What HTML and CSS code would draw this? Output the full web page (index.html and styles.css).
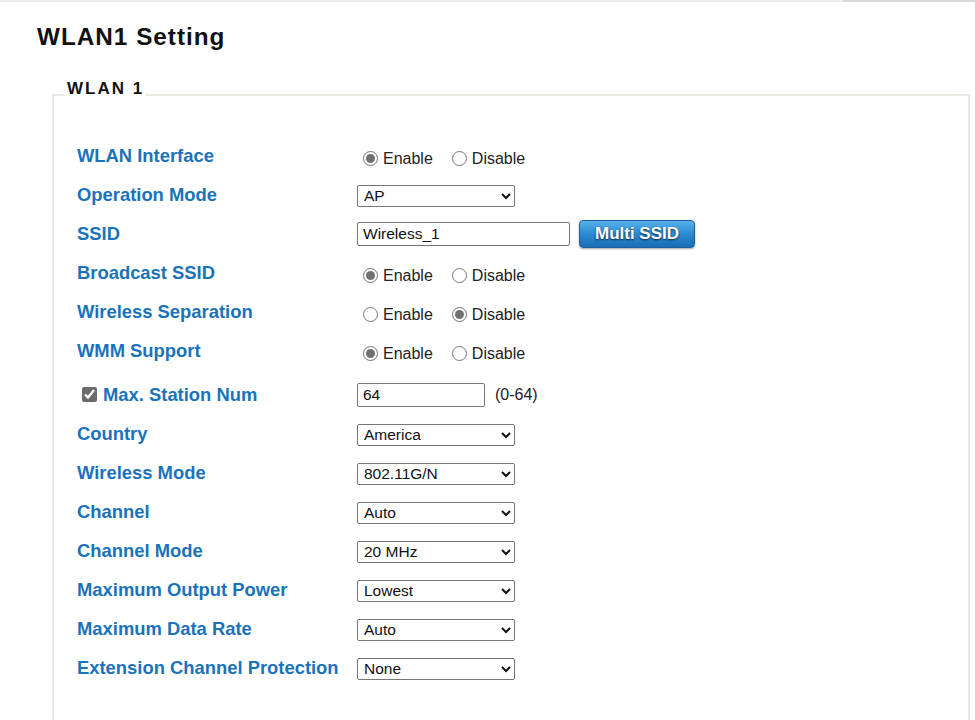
FILE: index.html
```html
<!DOCTYPE html>
<html lang="en">
<head>
  <meta charset="UTF-8">
  <meta name="viewport" content="width=device-width, initial-scale=1.0">
  <title>WLAN1 Setting</title>
  <link rel="stylesheet" href="styles.css">
</head>
<body>

  <div class="topbar"></div>

  <div class="page">
    <h2 class="page-title">WLAN1 Setting</h2>

    <fieldset class="wlan-box">
      <legend>WLAN 1</legend>

      <div class="settings">
        <span class="field-label">WLAN Interface</span>
        <div class="field">
          <label class="radio"><input type="radio" name="iface" checked> Enable</label>
          <label class="radio"><input type="radio" name="iface"> Disable</label>
        </div>

        <span class="field-label">Operation Mode</span>
        <div class="field">
          <select><option>AP</option></select>
        </div>

        <span class="field-label">SSID</span>
        <div class="field">
          <input type="text" class="text-input ssid" value="Wireless_1">
          <button type="button" class="btn-blue">Multi SSID</button>
        </div>

        <span class="field-label">Broadcast SSID</span>
        <div class="field">
          <label class="radio"><input type="radio" name="bcast" checked> Enable</label>
          <label class="radio"><input type="radio" name="bcast"> Disable</label>
        </div>

        <span class="field-label">Wireless Separation</span>
        <div class="field">
          <label class="radio"><input type="radio" name="sep"> Enable</label>
          <label class="radio"><input type="radio" name="sep" checked> Disable</label>
        </div>

        <span class="field-label">WMM Support</span>
        <div class="field">
          <label class="radio"><input type="radio" name="wmm" checked> Enable</label>
          <label class="radio"><input type="radio" name="wmm"> Disable</label>
        </div>

        <span class="field-label tall"><input type="checkbox" class="check" checked> Max. Station Num</span>
        <div class="field tall">
          <input type="text" class="text-input station" value="64">
          <span class="hint">(0-64)</span>
        </div>

        <span class="field-label">Country</span>
        <div class="field">
          <select><option>America</option></select>
        </div>

        <span class="field-label">Wireless Mode</span>
        <div class="field">
          <select><option>802.11G/N</option></select>
        </div>

        <span class="field-label">Channel</span>
        <div class="field">
          <select><option>Auto</option></select>
        </div>

        <span class="field-label">Channel Mode</span>
        <div class="field">
          <select><option>20 MHz</option></select>
        </div>

        <span class="field-label">Maximum Output Power</span>
        <div class="field">
          <select><option>Lowest</option></select>
        </div>

        <span class="field-label">Maximum Data Rate</span>
        <div class="field">
          <select><option>Auto</option></select>
        </div>

        <span class="field-label">Extension Channel Protection</span>
        <div class="field">
          <select><option>None</option></select>
        </div>
      </div>
    </fieldset>
  </div>

</body>
</html>
```

FILE: styles.css
```css
/* Reset */
* {
  margin: 0;
  padding: 0;
  box-sizing: border-box;
}

body {
  font-family: "Liberation Sans", Arial, sans-serif;
  background: #fff;
  color: #222;
}

/* Thin strip left over from the frame above */
.topbar {
  height: 2px;
  background: linear-gradient(to right, #ebebeb 86.5%, #d9d9d9 86.5%);
}

.page {
  padding: 0 5px 0 37px;
}

/* Title */
.page-title {
  margin-top: 21px;
  margin-bottom: 28px;
  font-size: 24.3px;
  line-height: 28px;
  letter-spacing: 1px;
  color: #111;
}

/* Group box */
.wlan-box {
  margin-left: 15px;
  border: 2px solid #ebe9e3;
  padding: 26px 12px 60px 11px;
}

.wlan-box legend {
  padding: 0 2px 11px;
  font-size: 17px;
  line-height: 20px;
  font-weight: bold;
  letter-spacing: 2px;
  color: #111;
}

/* Settings rows */
.settings {
  display: grid;
  grid-template-columns: 280px 1fr;
  grid-auto-rows: auto;
  margin-left: 12px;
}

.field-label {
  display: flex;
  align-items: center;
  min-height: 39px;
  font-size: 18.4px;
  font-weight: bold;
  color: #1a73ba;
}

.field {
  display: flex;
  align-items: center;
  min-height: 39px;
  font-size: 16px;
}

.tall {
  min-height: 44px;
  padding-top: 5px;
}

/* Radios */
.radio {
  display: inline-flex;
  align-items: center;
  margin-right: 13px;
  padding-top: 6px;
}

.radio input {
  width: 15px;
  height: 15px;
  margin: 0 5px 0 6px;
  accent-color: #707070;
}

.check {
  width: 15px;
  height: 15px;
  margin: 0 6px 0 5px;
  accent-color: #6b6b6b;
}

/* Selects and inputs */
select {
  width: 158px;
  height: 22px;
  margin-top: 2px;
  font-family: inherit;
  font-size: 15.5px;
  color: #111;
  padding-left: 2px;
  border: 1px solid #767676;
  border-radius: 2px;
  background: #fff;
}

.text-input {
  height: 24px;
  font-family: inherit;
  font-size: 15.5px;
  color: #111;
  padding: 0 5px;
  border: 1px solid #767676;
  border-radius: 2px;
}

.ssid {
  width: 213px;
}

.station {
  width: 128px;
}

.hint {
  margin-left: 10px;
}

/* Blue button */
.btn-blue {
  margin-left: 9px;
  width: 116px;
  height: 28px;
  font-family: inherit;
  font-size: 17px;
  font-weight: bold;
  color: #fff;
  text-shadow: 0 1px 2px rgba(0, 0, 0, 0.75);
  background: linear-gradient(to bottom, #58b2ea, #2a8ad2 50%, #1a6db4);
  border: 1px solid #1c609e;
  border-radius: 4px;
  box-shadow: 0 1px 2px rgba(0, 0, 0, 0.35);
  cursor: pointer;
}
```
